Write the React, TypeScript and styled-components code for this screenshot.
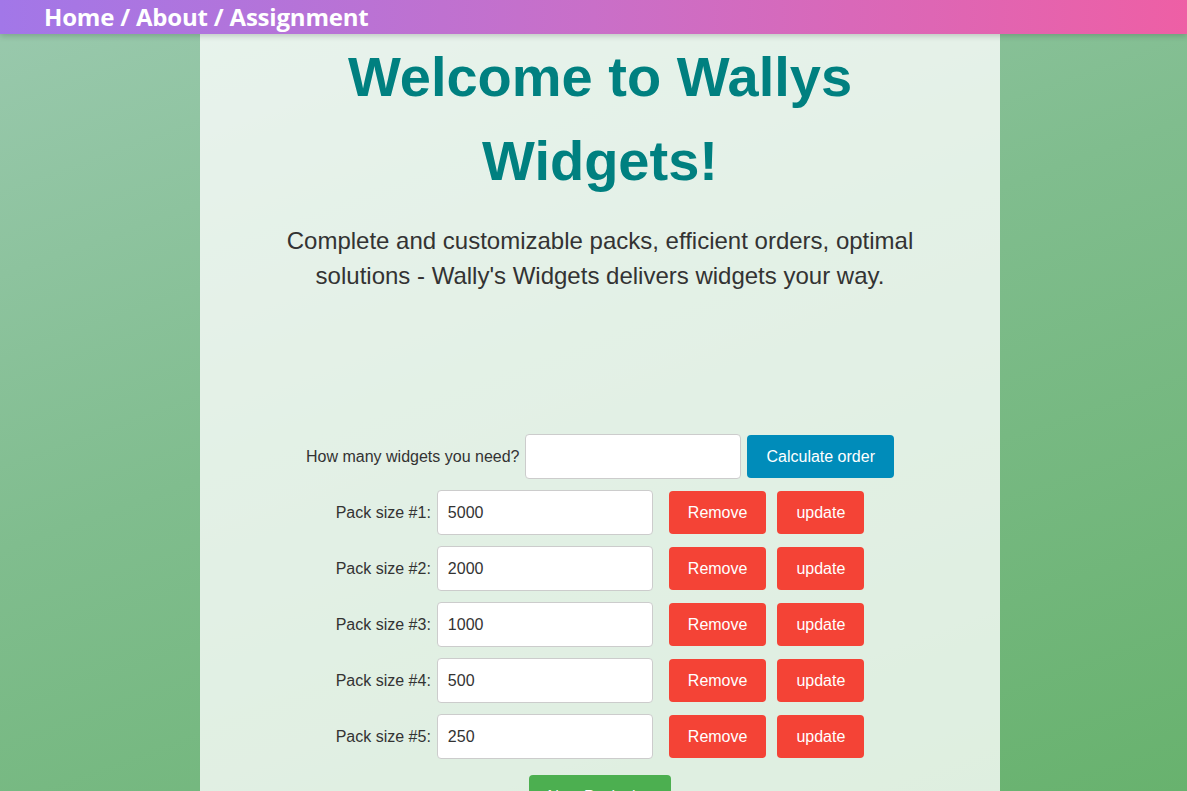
import React from "react";
import styled, { createGlobalStyle } from "styled-components";

const GlobalStyle = createGlobalStyle`
  html, body {
    margin: 0;
    padding: 0;
    height: 100%;
  }
  body {
    font-family: "Liberation Sans", Arial, sans-serif;
    background: linear-gradient(160deg, #9ac9ae 0%, #80bd8e 45%, #68b26e 100%);
    background-attachment: fixed;
    min-height: 100vh;
    overflow: hidden;
  }
`;

const Header = styled.header`
  position: relative;
  z-index: 2;
  height: 34px;
  display: flex;
  align-items: center;
  padding-left: 44px;
  background: linear-gradient(90deg, #a277e8 0%, #c96fc8 50%, #ee5fa5 100%);
  box-shadow: 0 2px 6px rgba(0, 0, 0, 0.18);
`;

const Crumbs = styled.nav`
  font-family: "Open Sans", "Noto Sans", sans-serif;
  font-weight: 700;
  font-size: 24px;
  color: #ffffff;
  letter-spacing: -0.2px;
  line-height: 1;
  padding-bottom: 1px;
`;

const Main = styled.main`
  width: 800px;
  margin: 0 0 0 200px;
  box-sizing: border-box;
  padding: 0 70px 40px;
  min-height: calc(100vh - 34px);
  background: rgba(255, 255, 255, 0.78);
  text-align: center;
`;

const Title = styled.h1`
  margin: 0;
  padding-top: 1px;
  font-family: "Liberation Sans", Arial, sans-serif;
  font-weight: 700;
  font-size: 56px;
  line-height: 84px;
  color: #008080;
`;

const Lead = styled.p`
  margin: 20px 0 0;
  font-size: 24px;
  line-height: 35px;
  color: #333333;
`;

const Form = styled.form`
  margin-top: 141px;
  display: flex;
  flex-direction: column;
  align-items: center;
  gap: 11px;
`;

const Row = styled.div`
  display: flex;
  align-items: center;
  justify-content: center;
`;

const Label = styled.label<{ $gap: number }>`
  font-size: 16px;
  color: #333333;
  margin-right: ${(p) => p.$gap}px;
`;

const Input = styled.input`
  box-sizing: border-box;
  width: 216px;
  height: 45px;
  border: 1px solid #cccccc;
  border-radius: 4px;
  padding: 0 10px;
  font-family: "Liberation Sans", Arial, sans-serif;
  font-size: 16px;
  color: #333333;
  background: #ffffff;
  outline: none;
`;

const Button = styled.button<{ $color: string; $ml: number }>`
  height: 43px;
  padding: 0 19px;
  margin-left: ${(p) => p.$ml}px;
  border: none;
  border-radius: 4px;
  background: ${(p) => p.$color};
  color: #ffffff;
  font-family: "Liberation Sans", Arial, sans-serif;
  font-size: 16px;
  cursor: pointer;
`;

const AddRow = styled.div`
  margin-top: 5px;
  display: flex;
  justify-content: center;
`;

const packs = [5000, 2000, 1000, 500, 250];

export default function App() {
  return (
    <>
      <GlobalStyle />
      <Header>
        <Crumbs>Home / About / Assignment</Crumbs>
      </Header>
      <Main>
        <Title>Welcome to Wallys Widgets!</Title>
        <Lead>
          Complete and customizable packs, efficient orders, optimal solutions - Wally's Widgets
          delivers widgets your way.
        </Lead>
        <Form onSubmit={(e) => e.preventDefault()}>
          <Row>
            <Label $gap={6}>How many widgets you need?</Label>
            <Input type="text" />
            <Button type="button" $color="#008cba" $ml={6}>
              Calculate order
            </Button>
          </Row>
          {packs.map((v, i) => (
            <Row key={v}>
              <Label $gap={6}>Pack size #{i + 1}:</Label>
              <Input type="text" defaultValue={String(v)} />
              <Button type="button" $color="#f44336" $ml={16}>
                Remove
              </Button>
              <Button type="button" $color="#f44336" $ml={11}>
                update
              </Button>
            </Row>
          ))}
          <AddRow>
            <Button type="button" $color="#4caf50" $ml={0}>
              New Pack size
            </Button>
          </AddRow>
        </Form>
      </Main>
    </>
  );
}
